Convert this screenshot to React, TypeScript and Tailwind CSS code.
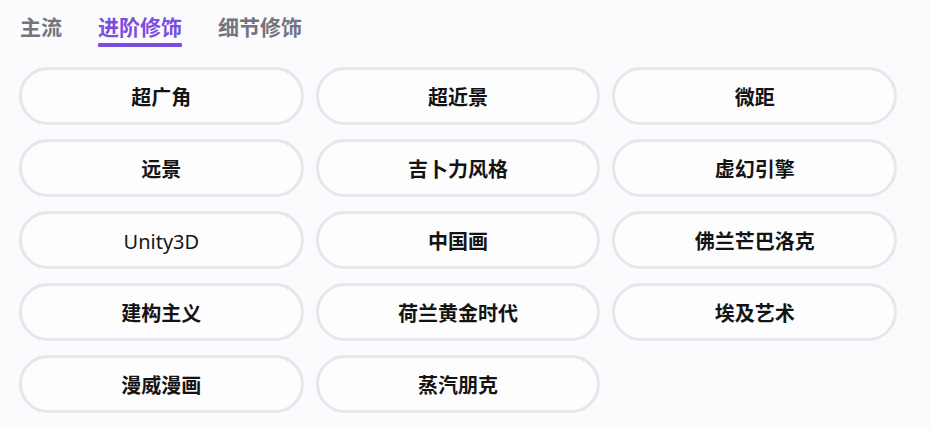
import { useState } from 'react'

const tabs = ['主流', '进阶修饰', '细节修饰']

const styles = [
  '超广角',
  '超近景',
  '微距',
  '远景',
  '吉卜力风格',
  '虚幻引擎',
  'Unity3D',
  '中国画',
  '佛兰芒巴洛克',
  '建构主义',
  '荷兰黄金时代',
  '埃及艺术',
  '漫威漫画',
  '蒸汽朋克',
]

export default function App() {
  const [active, setActive] = useState(1)

  return (
    <div
      className="min-h-[429px] w-[930px] bg-[#fbfbfd] pt-[13px] pl-[19px] pr-[33px]"
      style={{ fontFamily: '"Noto Sans", "Noto Sans CJK SC", sans-serif' }}
    >
      <div className="flex gap-[36px] pl-[1px]">
        {tabs.map((tab, i) => (
          <button
            key={tab}
            type="button"
            onClick={() => setActive(i)}
            className={`flex flex-col items-stretch text-[21px] leading-[29px] font-bold ${
              i === active ? 'text-[#7b4de0]' : 'text-[#74747f]'
            }`}
          >
            <span>{tab}</span>
            <span
              className={`mt-[1px] h-[4px] rounded-[1px] ${i === active ? 'bg-[#7b4de0]' : 'bg-transparent'}`}
            />
          </button>
        ))}
      </div>

      <div className="mt-[20px] grid grid-cols-3 gap-x-[12px] gap-y-[14px]">
        {styles.map((name) => (
          <button
            key={name}
            type="button"
            className={`flex h-[58px] items-center justify-center rounded-full border-[3px] border-[#e6e6ec] bg-[#fdfdfe] pt-[3px] text-[20px] text-[#141414] ${
              name === 'Unity3D' ? 'font-normal' : 'font-bold'
            }`}
          >
            {name}
          </button>
        ))}
      </div>
    </div>
  )
}
